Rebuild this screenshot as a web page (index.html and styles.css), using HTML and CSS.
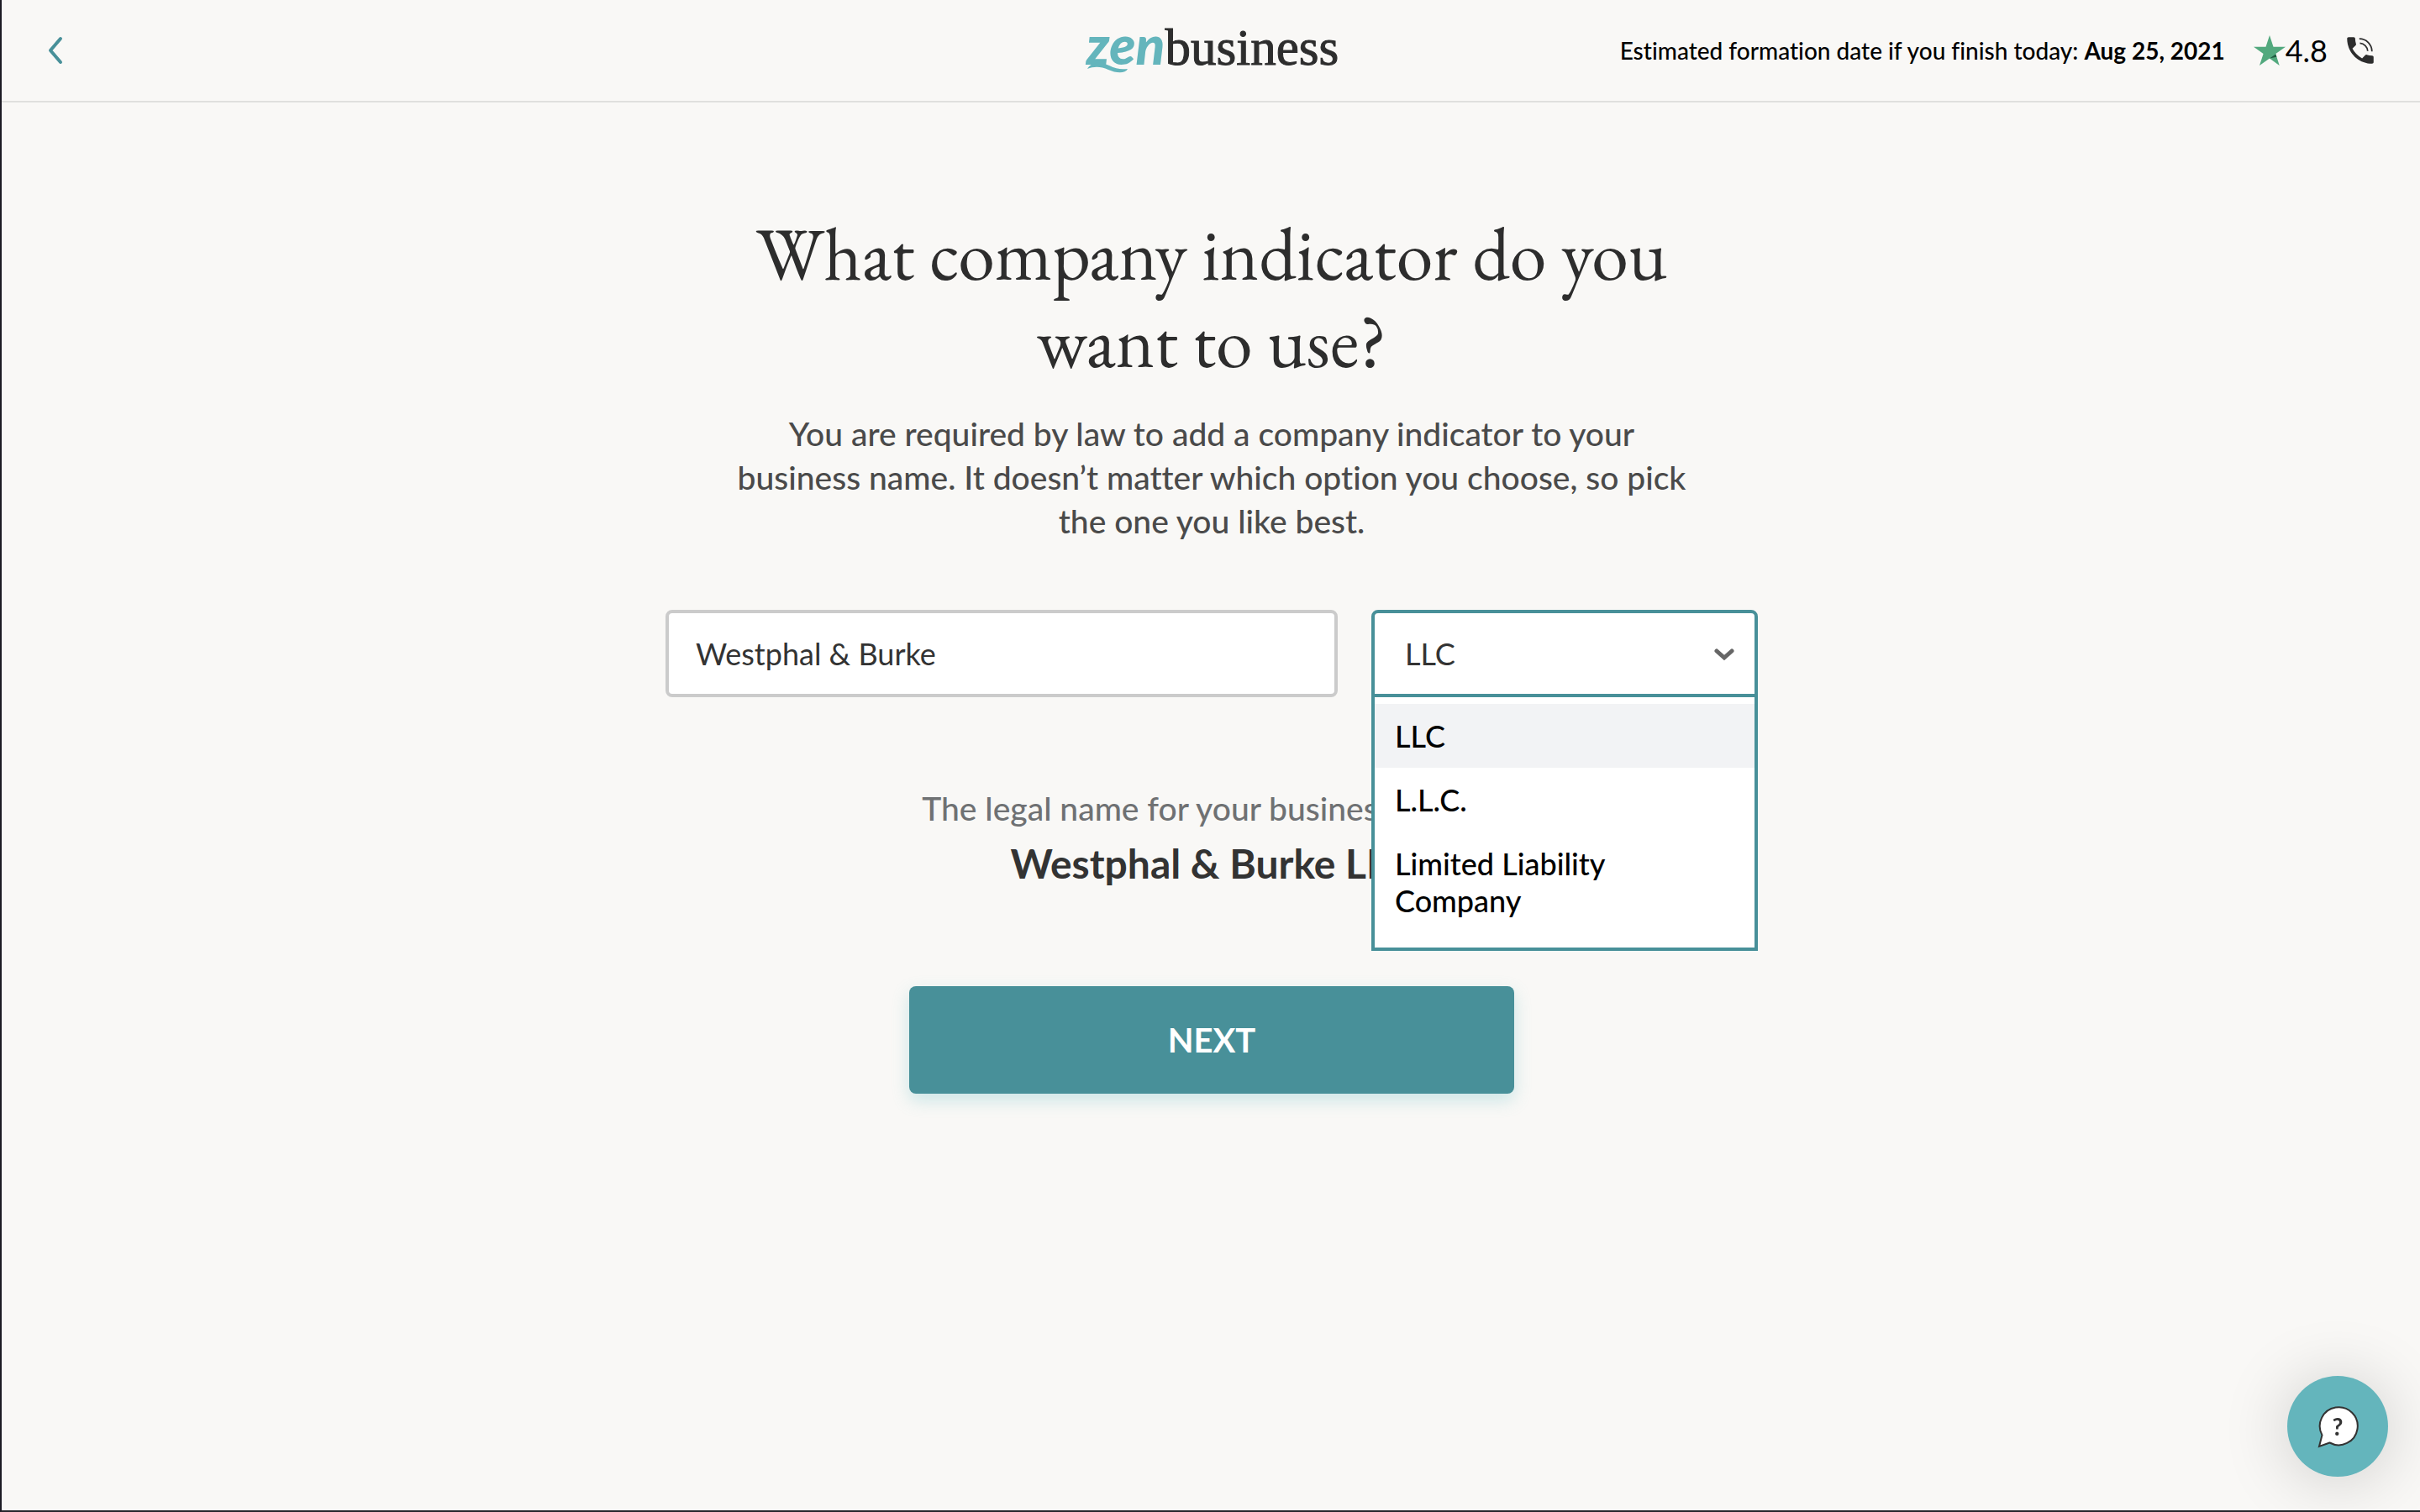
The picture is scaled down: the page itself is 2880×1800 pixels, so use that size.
FILE: index.html
```html
<!DOCTYPE html>
<html lang="en">
<head>
<meta charset="utf-8">
<title>ZenBusiness - Company indicator</title>
<meta name="viewport" content="width=device-width, initial-scale=1">
<link rel="stylesheet" href="styles.css">
</head>
<body>
<header class="header">
  <a class="back" href="#" aria-label="Back">
    <svg width="20" height="36" viewBox="0 0 20 36" fill="none" stroke="currentColor" stroke-width="4" stroke-linecap="round" stroke-linejoin="round"><path d="M16 4 4 18l12 14"/></svg>
  </a>
  <a class="logo" href="#" aria-label="ZenBusiness">
    <span class="logo-zen">zen</span><span class="logo-business">business</span>
    <svg class="logo-swash" width="52" height="14" viewBox="0 0 52 14"><path d="M1 9C6 0 17 0 27 5c8 4 14 5 22 4-3 6-14 5-23 1C17 6 9 6 1 9z" fill="currentColor"/></svg>
  </a>
  <div class="header-info">
    <p class="estimate">Estimated formation date if you finish today: <strong class="estimate-date">Aug 25, 2021</strong></p>
    <div class="rating">
      <svg width="38" height="36" viewBox="0 0 38 36"><path d="M19 0l4.500 13.700H38L26.300 22l4.400 14L19 27.400 7 36l4.600-14L0 13.700h14.500z" fill="#53a97e"/><path d="M19 27.400l7.300-4.800 1 3.200z" fill="#1f5b40"/></svg>
      <span>4.8</span>
    </div>
    <a class="phone" href="#" aria-label="Call us">
      <svg width="42" height="42" viewBox="0 0 24 24"><path fill="#2d2d2d" d="M20 15.500c-1.250 0-2.450-.2-3.570-.57-.35-.11-.74-.03-1.020.24l-2.200 2.200a15.100 15.100 0 0 1-6.590-6.590l2.200-2.200c.28-.28.36-.67.25-1.020A11.400 11.400 0 0 1 8.500 4c0-.55-.45-1-1-1H4c-.55 0-1 .45-1 1 0 9.390 7.610 17 17 17 .55 0 1-.45 1-1v-3.500c0-.55-.45-1-1-1z"/><path fill="none" stroke="#2d2d2d" stroke-width="1" d="M11.300 4.100a8.600 8.600 0 0 1 8.600 8.600M11.700 7.100a5.600 5.600 0 0 1 5.300 5.300"/></svg>
    </a>
  </div>
</header>

<main class="main">
  <h1 class="title">What company indicator do you want to use?</h1>
  <p class="lead">You are required by law to add a company indicator to your business name. It doesn’t matter which option you choose, so pick the one you like best.</p>

  <form class="form">
    <div class="fields">
      <input class="control name" type="text" value="Westphal &amp; Burke" aria-label="Business name">
      <div class="picker">
        <select class="control picker-select" aria-label="Company indicator">
          <option>LLC</option>
          <option>L.L.C.</option>
          <option>Limited Liability Company</option>
        </select>
        <svg class="picker-arrow" width="24" height="16" viewBox="0 0 24 16" fill="none" stroke="#666" stroke-width="5" stroke-linecap="round" stroke-linejoin="miter"><path d="M3 3l9 8 9-8"/></svg>
        <ul class="menu" role="listbox" aria-label="Company indicator">
          <li class="menu-item menu-item-active" role="option" aria-selected="true">LLC</li>
          <li class="menu-item" role="option" aria-selected="false">L.L.C.</li>
          <li class="menu-item" role="option" aria-selected="false">Limited Liability Company</li>
        </ul>
      </div>
    </div>
    <p class="legal">The legal name for your business will be:</p>
    <p class="legal-name">Westphal &amp; Burke LLC</p>
    <button class="next" type="submit">NEXT</button>
  </form>
</main>

<button class="help" type="button" aria-label="Help">
  <svg width="50" height="52" viewBox="0 0 50 52"><path d="M15.500 45.500 3 50l3.500-13.500A22.500 22.500 0 1 1 15.500 45.500z" fill="#fff" stroke="#333" stroke-width="2"/></svg>
  <span class="help-mark">?</span>
</button>
</body>
</html>
```
FILE: styles.css
```css
* {
  box-sizing: border-box;
}

body {
  margin: 0;
  min-height: 100vh;
  border-left: 2px solid #1c1b24;
  border-bottom: 2px solid #26262c;
  background: #f9f8f6;
  color: #000;
  font-family: Lato, "Liberation Sans", sans-serif;
  font-variant-ligatures: none;
}

h1,
p,
ul {
  margin: 0;
  padding: 0;
}

/* Header */

.header {
  display: grid;
  grid-template-columns: 1fr auto 1fr;
  align-items: center;
  height: 122px;
  padding: 0 50px 0 54px;
  border-bottom: 2px solid #e0e0de;
}

.back {
  display: flex;
  justify-self: start;
  color: #489099;
}

.logo {
  position: relative;
  display: flex;
  align-items: baseline;
  padding-bottom: 10px;
  color: #2d2d2d;
  font-size: 61px;
  line-height: 72px;
  text-decoration: none;
}

.logo-zen {
  color: #64b5bc;
  font-size: 64px;
  font-weight: 900;
  font-style: italic;
}

.logo-business {
  font-family: "Liberation Serif", serif;
  -webkit-text-stroke: 1px currentColor;
}

.logo-swash {
  position: absolute;
  left: 0;
  bottom: 16px;
  color: #64b5bc;
}

.header-info {
  display: flex;
  justify-self: end;
  align-items: center;
}

.estimate {
  font-size: 28px;
  font-weight: 500;
  line-height: 36px;
}

.rating {
  display: flex;
  align-items: center;
  margin: 0 18px 0 34px;
  font-size: 36px;
  line-height: 44px;
}

.phone {
  display: flex;
}

/* Question */

.main {
  display: flex;
  flex-direction: column;
  align-items: center;
  padding: 128px 48px 160px 50px;
  text-align: center;
}

.title {
  max-width: 1200px;
  color: #2d2d2d;
  font-family: "EB Garamond", "Liberation Serif", serif;
  font-size: 88px;
  font-weight: 400;
  line-height: 104px;
}

.lead {
  max-width: 1148px;
  margin-top: 32px;
  color: #4a4a4a;
  font-size: 39px;
  font-weight: 500;
  line-height: 52px;
}

.form {
  display: flex;
  flex-direction: column;
  align-items: center;
  width: 100%;
  max-width: 1300px;
  margin-top: 80px;
}

.fields {
  display: grid;
  grid-template-columns: 1fr 460px;
  gap: 40px;
  width: 100%;
}

.control {
  width: 100%;
  height: 104px;
  padding: 0 32px;
  border: 4px solid #cbcbcb;
  border-radius: 8px;
  outline: 0;
  background: #fff;
  color: #333;
  font: 36px/44px Lato, "Liberation Sans", sans-serif;
}

.picker {
  position: relative;
}

.picker-select {
  padding-left: 36px;
  border-color: #489099;
  border-radius: 8px 8px 0 0;
  appearance: none;
}

.picker-arrow {
  position: absolute;
  top: 46px;
  right: 28px;
  pointer-events: none;
}

.menu {
  position: absolute;
  z-index: 1;
  top: 100%;
  left: 0;
  width: 100%;
  padding: 8px 0 18px;
  border: 4px solid #489099;
  border-top: 0;
  background: #fff;
  list-style: none;
  text-align: left;
}

.menu-item {
  padding: 16px 80px 16px 24px;
  font-size: 36px;
  font-weight: 500;
  line-height: 44px;
}

.menu-item-active {
  background: #f2f3f5;
}

.legal {
  margin-top: 106px;
  color: #6f7173;
  font-size: 39px;
  font-weight: 500;
  line-height: 52px;
}

.legal-name {
  margin-top: 8px;
  color: #333;
  font-size: 48px;
  font-weight: 700;
  line-height: 64px;
}

.next {
  width: 100%;
  max-width: 720px;
  height: 128px;
  margin-top: 114px;
  border: 0;
  border-radius: 8px;
  background: #489099;
  box-shadow: 0 8px 20px rgba(100, 190, 195, 0.3);
  color: #fff;
  font: 700 40px/52px Lato, "Liberation Sans", sans-serif;
}

/* Help bubble */

.help {
  position: fixed;
  right: 38px;
  bottom: 42px;
  display: grid;
  place-items: center;
  width: 120px;
  height: 120px;
  padding: 0;
  border: 0;
  border-radius: 50%;
  background: #64b5bc;
  box-shadow: 0 4px 80px rgba(0, 0, 0, 0.18);
}

.help svg,
.help-mark {
  grid-area: 1 / 1;
}

.help-mark {
  color: #333;
  font: 700 28px/32px Lato, "Liberation Sans", sans-serif;
}
```
